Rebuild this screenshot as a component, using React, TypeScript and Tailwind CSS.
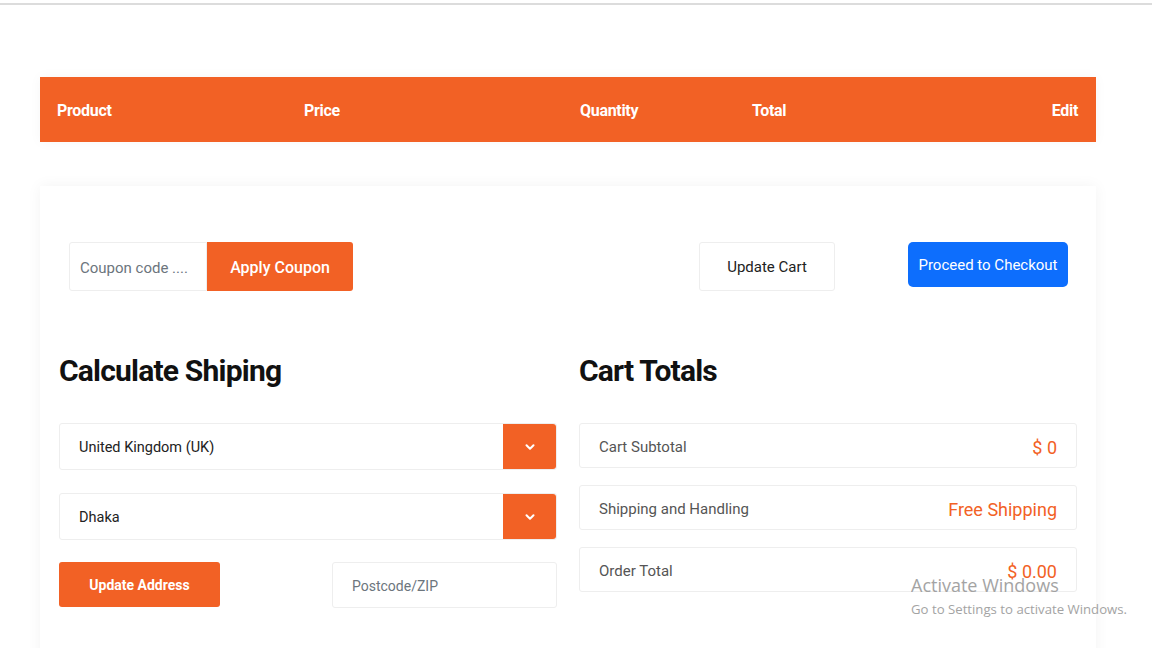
import React from 'react';
import { ChevronDown } from 'lucide-react';

const font = { fontFamily: 'Roboto, "Liberation Sans", sans-serif' };

const columns = [
  { label: 'Product', w: 'w-[247px]' },
  { label: 'Price', w: 'w-[276px]' },
  { label: 'Quantity', w: 'w-[172px]' },
  { label: 'Total', w: 'flex-1' },
];

const totals = [
  { label: 'Cart Subtotal', value: '$ 0' },
  { label: 'Shipping and Handling', value: 'Free Shipping' },
  { label: 'Order Total', value: '$ 0.00' },
];

function SelectBox({ value }: { value: string }) {
  return (
    <div className="flex h-[47px] rounded-[3px] border border-[#eeeeee] bg-white">
      <div className="flex flex-1 items-center pl-[19px] pt-[2px] text-[14.5px] text-[#222]">{value}</div>
      <div className="flex w-[53px] items-center justify-center rounded-r-[3px] bg-[#f26125] text-white">
        <ChevronDown size={14} strokeWidth={3.5} />
      </div>
    </div>
  );
}

export default function App() {
  return (
    <div className="relative min-h-[648px] overflow-hidden bg-white" style={font}>
      <div className="mt-[3px] h-[2px] w-full bg-[#dcdcdc]"></div>

      {/* table header */}
      <div className="ml-[40px] mt-[72px] flex h-[65px] w-[1056px] items-center bg-[#f26125] pl-[17px] pr-[18px] pt-[2px] text-[16px] font-bold tracking-[-0.3px] text-white shadow-[0_0_12px_rgba(0,0,0,0.04)]">
        {columns.map((c) => (
          <div key={c.label} className={c.w}>{c.label}</div>
        ))}
        <div>Edit</div>
      </div>

      {/* cart card */}
      <div className="ml-[40px] mt-[44px] w-[1056px] bg-white px-[19px] pb-[60px] pt-[56px] shadow-[0_0_14px_rgba(0,0,0,0.05)]">
        <div className="flex items-start justify-between pl-[10px] pr-[9px]">
          <div className="flex">
            <input
              placeholder="Coupon code ...."
              className="h-[49px] w-[138px] rounded-l-[3px] border border-[#eeeeee] bg-white px-[10px] pt-[2px] text-[15px] text-[#222] outline-none placeholder:text-[#6c757d]"
            />
            <button className="h-[49px] w-[146px] rounded-r-[3px] bg-[#f26125] pt-[2px] text-[16px] font-medium text-white">
              Apply Coupon
            </button>
          </div>
          <div className="flex gap-[73px]">
            <button className="-ml-px h-[49px] w-[136px] rounded-[3px] border border-[#eeeeee] bg-white pt-[2px] text-[15px] text-[#222]">
              Update Cart
            </button>
            <button className="h-[45px] w-[160px] rounded-[5px] bg-[#0d6efd] pt-[1px] text-[15px] text-white">
              Proceed to Checkout
            </button>
          </div>
        </div>

        <div className="mt-[60px] grid grid-cols-2 gap-[22px]">
          {/* left column */}
          <div>
            <h2 className="mb-[32px] h-[40px] text-[30px] font-bold leading-[40px] tracking-[-0.8px] text-[#111]">
              Calculate Shiping
            </h2>
            <div className="flex flex-col gap-[23px]">
              <SelectBox value="United Kingdom (UK)" />
              <SelectBox value="Dhaka" />
            </div>
            <div className="mt-[22px] flex justify-between">
              <button className="h-[45px] w-[161px] rounded-[3px] bg-[#f26125] pt-[2px] text-[14px] font-bold text-white">
                Update Address
              </button>
              <input
                placeholder="Postcode/ZIP"
                className="h-[46px] w-[225px] rounded-[3px] border border-[#eeeeee] bg-white px-[19px] pt-[2px] text-[14px] outline-none placeholder:text-[#6c757d]"
              />
            </div>
          </div>

          {/* right column */}
          <div>
            <h2 className="mb-[32px] h-[40px] text-[30px] font-bold leading-[40px] tracking-[-0.8px] text-[#111]">
              Cart Totals
            </h2>
            <div className="flex flex-col gap-[17px]">
              {totals.map((t) => (
                <div
                  key={t.label}
                  className="flex h-[45px] items-center justify-between rounded-[3px] border border-[#eeeeee] pl-[19px] pr-[19px] pt-[3px]"
                >
                  <span className="text-[15px] text-[#555]">{t.label}</span>
                  <span className="text-[18px] text-[#f26125]">{t.value}</span>
                </div>
              ))}
            </div>
          </div>
        </div>
      </div>

      {/* windows watermark */}
      <div
        className="pointer-events-none absolute left-[911px] top-[573px] text-[#9a9a9a]"
        style={{ fontFamily: '"Open Sans", "Liberation Sans", sans-serif' }}
      >
        <div className="text-[18px] leading-[24px] opacity-90">Activate Windows</div>
        <div className="mt-[2px] text-[13.2px] leading-[20px] opacity-90">Go to Settings to activate Windows.</div>
      </div>
    </div>
  );
}
